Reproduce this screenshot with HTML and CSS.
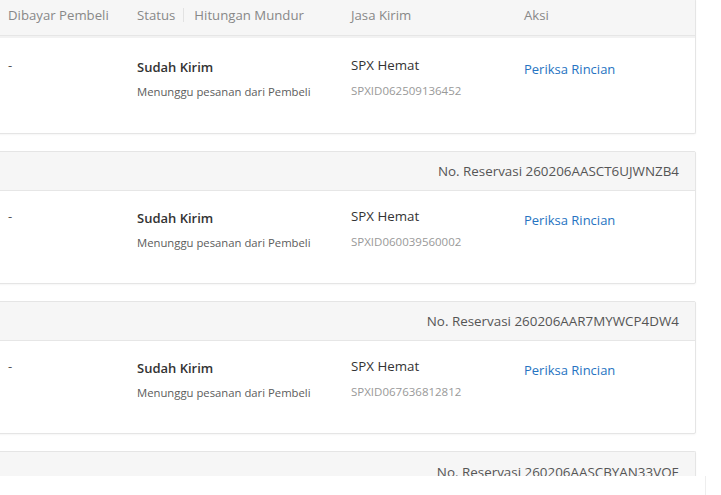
FILE: index.html
```html
<!DOCTYPE html>
<html>
<head>
<meta charset="utf-8">
<link rel="stylesheet" href="styles.css">
</head>
<body>
<div class="page">
  <div class="card first">
    <div class="cols thead">
      <div>Dibayar Pembeli</div>
      <div class="status-h"><span>Status</span><span class="sep"></span><span>Hitungan Mundur</span></div>
      <div>Jasa Kirim</div>
      <div>Aksi</div>
    </div>
    <div class="cols row row-first">
      <div class="dash">-</div>
      <div><div class="st">Sudah Kirim</div><div class="sub">Menunggu pesanan dari Pembeli</div></div>
      <div><div class="courier">SPX Hemat</div><div class="trk">SPXID062509136452</div></div>
      <div><a class="act">Periksa Rincian</a></div>
    </div>
  </div>

  <div class="card">
    <div class="chead">No. Reservasi 260206AASCT6UJWNZB4</div>
    <div class="cols row">
      <div class="dash">-</div>
      <div><div class="st">Sudah Kirim</div><div class="sub">Menunggu pesanan dari Pembeli</div></div>
      <div><div class="courier">SPX Hemat</div><div class="trk">SPXID060039560002</div></div>
      <div><a class="act">Periksa Rincian</a></div>
    </div>
  </div>

  <div class="card">
    <div class="chead">No. Reservasi 260206AAR7MYWCP4DW4</div>
    <div class="cols row">
      <div class="dash">-</div>
      <div><div class="st">Sudah Kirim</div><div class="sub">Menunggu pesanan dari Pembeli</div></div>
      <div><div class="courier">SPX Hemat</div><div class="trk">SPXID067636812812</div></div>
      <div><a class="act">Periksa Rincian</a></div>
    </div>
  </div>

  <div class="card last">
    <div class="chead">No. Reservasi 260206AASCBYAN33VOE</div>
  </div>
</div>
<div class="footer-bar"></div>
</body>
</html>
```
FILE: styles.css
```css
html, body {
  margin: 0;
  padding: 0;
  background: #fff;
  overflow: hidden;
  height: 495px;
}
body {
  font-family: "Open Sans", "Noto Sans", sans-serif;
  color: #333;
}
.page {
  width: 708px;
  margin-left: -12px;
  display: flex;
  flex-direction: column;
  gap: 17px;
}
.card {
  background: #fff;
  border: 1px solid #e5e5e5;
  border-radius: 2px;
  box-shadow: 0 1px 2px rgba(0,0,0,0.04);
}
.card.first {
  border-top: none;
  margin-top: -1px;
}
.card.last {
  border-bottom: none;
}
.cols {
  display: grid;
  grid-template-columns: 129px 214px 173px 1fr;
  padding-left: 19px;
}
.thead {
  background: #f6f6f6;
  height: 37px;
  box-sizing: border-box;
  padding-bottom: 4px;
  align-items: center;
  font-size: 13.2px;
  color: #888;
  border-bottom: 1px solid #e6e6e6;
  box-shadow: 0 2px 0 #f2f2f2;
  margin-bottom: 2px;
}
.status-h {
  display: flex;
  align-items: center;
}
.sep {
  display: inline-block;
  width: 1px;
  height: 14px;
  background: #e2e2e2;
  margin: 0 10px 0 8px;
}
.chead {
  background: #f6f6f6;
  height: 38px;
  border-bottom: 1px solid #e6e6e6;
  display: flex;
  align-items: center;
  justify-content: flex-end;
  padding-right: 16px;
  font-size: 13.4px;
  color: #555;
}
.card.last .chead {
  height: 40px;
  border-bottom: none;
}
.row {
  height: 92px;
  align-items: start;
  padding-top: 15px;
  box-sizing: border-box;
}
.row-first {
  height: 95px;
  padding-top: 17px;
}
.dash {
  font-size: 13px;
  color: #555;
  padding-top: 1px;
}
.st {
  font-size: 13px;
  font-weight: 600;
  color: #333;
  line-height: 20px;
  margin-top: 2px;
}
.sub {
  font-size: 11.3px;
  color: #5c5c5c;
  margin-top: 7px;
  line-height: 16px;
}
.courier {
  font-size: 13.3px;
  color: #333;
  line-height: 20px;
}
.trk {
  font-size: 11.5px;
  color: #999;
  margin-top: 8px;
  line-height: 16px;
}
.act {
  display: inline-block;
  font-size: 13px;
  color: #2673c2;
  line-height: 20px;
  margin-top: 4px;
  margin-left: 0;
}
.footer-bar {
  position: fixed;
  left: 0;
  bottom: 0;
  width: 705px;
  height: 19px;
  background: #fff;
  border-right: 1px solid #eee;
}
```
